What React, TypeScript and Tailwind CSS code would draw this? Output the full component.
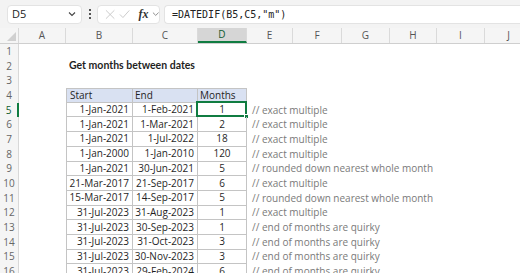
import React from "react";

const COLS = [
  { k: "A", w: "w-[47px]" },
  { k: "B", w: "w-[67px]" },
  { k: "C", w: "w-[65px]" },
  { k: "D", w: "w-[49px]" },
  { k: "E", w: "w-[46px]" },
  { k: "F", w: "w-[49px]" },
  { k: "G", w: "w-[48px]" },
  { k: "H", w: "w-[47px]" },
  { k: "I", w: "w-[48px]" },
  { k: "J", w: "w-[48px]" },
];

const EX = "// exact multiple";
const RD = "// rounded down nearest whole month";
const EQ = "// end of months are quirky";

const DATA: [string, string, string, string][] = [
  ["1-Jan-2021", "1-Feb-2021", "1", EX],
  ["1-Jan-2021", "1-Mar-2021", "2", EX],
  ["1-Jan-2021", "1-Jul-2022", "18", EX],
  ["1-Jan-2000", "1-Jan-2010", "120", EX],
  ["1-Jan-2021", "30-Jun-2021", "5", RD],
  ["21-Mar-2017", "21-Sep-2017", "6", EX],
  ["15-Mar-2017", "14-Sep-2017", "5", RD],
  ["31-Jul-2023", "31-Aug-2023", "1", EX],
  ["31-Jul-2023", "30-Sep-2023", "1", EQ],
  ["31-Jul-2023", "31-Oct-2023", "3", EQ],
  ["31-Jul-2023", "30-Nov-2023", "3", EQ],
  ["31-Jul-2023", "29-Feb-2024", "6", EQ],
];

const font = { fontFamily: '"Open Sans", "Liberation Sans", sans-serif' };

function RowHeader({ n, active }: { n: number; active?: boolean }) {
  return (
    <div
      className={
        "w-[19px] shrink-0 h-full flex items-center justify-center text-[10px] bg-[#f5f5f5] border-r " +
        (active ? "border-r-2 border-[#107c41] text-[#0e5c2f] bg-[#d6d6d6]" : "border-[#d8d8d8] text-[#666666]")
      }
    >
      {n}
    </div>
  );
}

function Cell({
  w,
  children,
  cls = "",
}: {
  w: string;
  children?: React.ReactNode;
  cls?: string;
}) {
  return (
    <div className={w + " shrink-0 h-full flex items-center whitespace-nowrap relative " + cls}>
      {children}
    </div>
  );
}

export default function App() {
  const tb = "border-[#c4c4c4]";
  return (
    <div className="w-[520px] h-[273px] overflow-hidden bg-white text-[#1f1f1f]" style={font}>
      {/* formula bar */}
      <div className="h-[28px] bg-[#f3f3f3] flex items-center pl-[7px] gap-0">
        <div className="w-[75px] h-[19px] bg-white rounded-[4px] border border-[#e3e3e3] flex items-center justify-between pl-[4px] pr-[5px]">
          <span className="text-[11px] text-[#222]">D5</span>
          <svg width="8" height="6" viewBox="0 0 8 6">
            <path d="M1 1.5 L4 4.5 L7 1.5" fill="none" stroke="#444" strokeWidth="1.1" />
          </svg>
        </div>
        <div className="w-[15px] flex flex-col items-center justify-center gap-[2px]">
          <div className="w-[2px] h-[2px] bg-[#555]" />
          <div className="w-[2px] h-[2px] bg-[#555]" />
          <div className="w-[2px] h-[2px] bg-[#555]" />
        </div>
        <div className="w-[63px] h-[19px] bg-white rounded-[4px] border border-[#e3e3e3] flex items-center pl-[6px]">
          <svg width="11" height="11" viewBox="0 0 11 11" className="ml-[1px]">
            <path d="M1 1 L10 10 M10 1 L1 10" stroke="#c2c2c2" strokeWidth="0.9" />
          </svg>
          <svg width="12" height="10" viewBox="0 0 12 10" className="ml-[4px]">
            <path d="M1 5.5 L4.2 8.8 L11 1.2" fill="none" stroke="#c2c2c2" strokeWidth="0.9" />
          </svg>
          <span
            className="ml-[8px] text-[12px] italic font-bold text-[#333] leading-none"
            style={{ fontFamily: '"Liberation Serif", serif' }}
          >
            fx
          </span>
          <svg width="8" height="6" viewBox="0 0 8 6" className="ml-[3px]">
            <path d="M1 1.5 L4 4.5 L7 1.5" fill="none" stroke="#777" strokeWidth="0.9" />
          </svg>
        </div>
        <div className="ml-[4px] flex-1 h-[19px] bg-white rounded-l-[4px] border border-r-0 border-[#e3e3e3] flex items-center pl-[7px]">
          <span
            className="text-[10px] text-[#222]"
            style={{ fontFamily: '"DejaVu Sans Mono", "Liberation Mono", monospace' }}
          >
            =DATEDIF(B5,C5,"m")
          </span>
        </div>
      </div>

      {/* column headers */}
      <div className="h-[16px] flex bg-[#f5f5f5] border-b border-[#cfcfcf]">
        <div className="w-[19px] shrink-0 h-full relative border-r border-[#d8d8d8]">
          <svg width="9" height="9" viewBox="0 0 9 9" className="absolute right-[2px] bottom-[2px]">
            <path d="M9 0 L9 9 L0 9 Z" fill="#d0d0d0" />
          </svg>
        </div>
        {COLS.map((c) => (
          <div
            key={c.k}
            className={
              c.w +
              " shrink-0 h-full flex items-center justify-center text-[10px] border-r border-[#dadada] " +
              (c.k === "D"
                ? "bg-[#d6d6d6] text-[#0e5c2f] border-b-2 border-b-[#107c41]"
                : "text-[#555]")
            }
          >
            {c.k}
          </div>
        ))}
      </div>

      {/* rows */}
      {Array.from({ length: 16 }, (_, i) => {
        const r = i + 1;
        const d = r >= 5 ? DATA[r - 5] : null;
        return (
          <div key={r} className="h-[14.7px] flex text-[10px]">
            <RowHeader n={r} active={r === 5} />
            <Cell w="w-[47px]" />
            {r === 2 ? (
              <Cell w="w-[67px]" cls="pl-[3px] font-bold text-[10.5px]">
                <span style={{ fontFamily: 'Lato, "Open Sans", sans-serif' }}>Get months between dates</span>
              </Cell>
            ) : r === 4 ? (
              <Cell w="w-[67px]" cls={"pl-[3px] bg-[#d9e1f2] border-l border-t border-r border-b " + tb}>
                Start
              </Cell>
            ) : d ? (
              <Cell w="w-[67px]" cls={"justify-end pr-[3px] border-l border-r border-b " + tb}>
                {d[0]}
              </Cell>
            ) : (
              <Cell w="w-[67px]" />
            )}
            {r === 4 ? (
              <Cell w="w-[65px]" cls={"pl-[2px] bg-[#d9e1f2] border-t border-r border-b " + tb}>
                End
              </Cell>
            ) : d ? (
              <Cell w="w-[65px]" cls={"justify-end pr-[3px] border-r border-b " + tb}>
                {d[1]}
              </Cell>
            ) : (
              <Cell w="w-[65px]" />
            )}
            {r === 4 ? (
              <Cell w="w-[49px]" cls={"pl-[2px] bg-[#d9e1f2] border-t border-r border-b " + tb}>
                Months
              </Cell>
            ) : d ? (
              <Cell w="w-[49px]" cls={"justify-center border-r border-b " + tb}>
                {d[2]}
                {r === 5 && (
                  <div className="absolute left-[-2px] top-[-2px] right-[-1px] bottom-[-1px] border-2 border-[#107c41]">
                    <div className="absolute right-[-4px] bottom-[-4px] w-[5px] h-[5px] bg-[#107c41] border border-white" />
                  </div>
                )}
              </Cell>
            ) : (
              <Cell w="w-[49px]" />
            )}
            {d ? (
              <Cell w="w-[46px]" cls="pl-[5px] text-[#7a7a7a]">
                {d[3]}
              </Cell>
            ) : (
              <Cell w="w-[46px]" />
            )}
          </div>
        );
      })}
    </div>
  );
}
